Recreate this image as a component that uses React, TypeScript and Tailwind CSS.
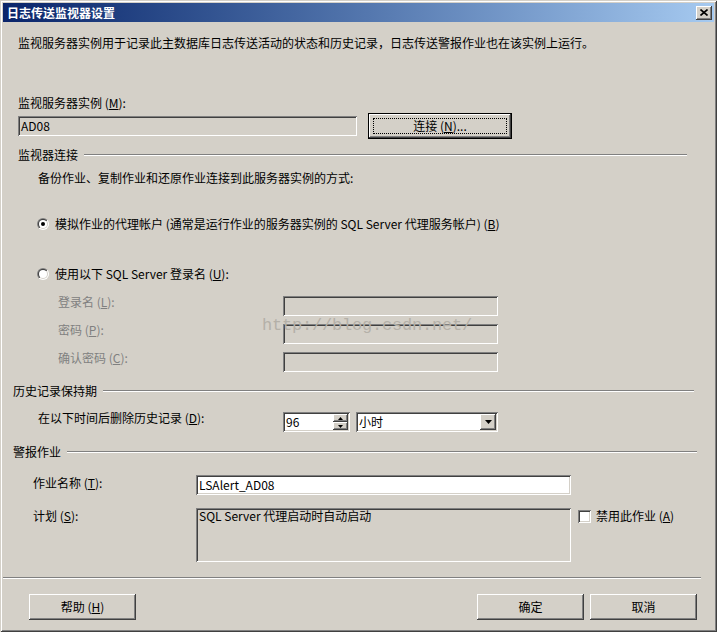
const sunken =
  "shadow-[inset_1px_1px_#808080,inset_-1px_-1px_#ffffff,inset_2px_2px_#404040,inset_-2px_-2px_#d4d0c8]";
const raised =
  "shadow-[inset_-1px_-1px_#404040,inset_1px_1px_#ffffff,inset_-2px_-2px_#808080,inset_2px_2px_#d4d0c8]";

const Mn = ({ k }: { k: string }) => (
  <>
    (<u className="underline-offset-1">{k}</u>)
  </>
);

const Radio = ({ checked }: { checked?: boolean }) => (
  <svg width="12" height="12" viewBox="0 0 12 12" className="shrink-0">
    <defs>
      <linearGradient id="rOuter" x1="0" y1="0" x2="1" y2="1">
        <stop offset="0.5" stopColor="#808080" />
        <stop offset="0.5" stopColor="#ffffff" />
      </linearGradient>
      <linearGradient id="rInner" x1="0" y1="0" x2="1" y2="1">
        <stop offset="0.5" stopColor="#404040" />
        <stop offset="0.5" stopColor="#d4d0c8" />
      </linearGradient>
    </defs>
    <circle cx="6" cy="6" r="6" fill="url(#rOuter)" />
    <circle cx="6" cy="6" r="5" fill="url(#rInner)" />
    <circle cx="6" cy="6" r="4" fill="#ffffff" />
    {checked && <circle cx="6" cy="6" r="2" fill="#000000" />}
  </svg>
);

const GroupHeader = ({ label, className }: { label: string; className: string }) => (
  <div className={`flex items-center h-4 ${className}`}>
    <span className="leading-[12px]">{label}</span>
    <div className="ml-1.5 flex-1 h-[2px] border-t border-[#808080] border-b border-b-white" />
  </div>
);

const Btn = ({ children, className = "" }: { children: React.ReactNode; className?: string }) => (
  <div className={`h-[26px] w-[107px] flex items-center justify-center bg-[#d4d0c8] ${raised} ${className}`}>
    <span className="leading-[12px]">{children}</span>
  </div>
);

export default function App() {
  return (
    <div className="relative w-[717px] h-[632px] overflow-hidden bg-[#d4d0c8] text-[12px] text-black font-['Noto_Sans_CJK_SC',sans-serif] flex flex-col shadow-[inset_1px_1px_#d4d0c8,inset_-1px_-1px_#404040,inset_2px_2px_#ffffff,inset_-2px_-2px_#808080]">
      {/* title bar */}
      <div className="mx-[3px] mt-[3px] h-[19px] flex items-center justify-between bg-gradient-to-r from-[#0a246a] to-[#a6caf0]">
        <span className="pl-[4px] font-bold text-white leading-[12px]">日志传送监视器设置</span>
        <div className={`mr-[2px] w-[16px] h-[14px] flex items-center justify-center bg-[#d4d0c8] ${raised}`}>
          <svg width="8" height="7" viewBox="0 0 8 7">
            <path d="M0.5 0.5 L7.5 6.5 M7.5 0.5 L0.5 6.5" stroke="#000" strokeWidth="1.6" />
          </svg>
        </div>
      </div>

      <div className="mt-[11px] h-5 pl-[18px] flex items-center">
        <span className="leading-[12px]">
          监视服务器实例用于记录此主数据库日志传送活动的状态和历史记录，日志传送警报作业也在该实例上运行。
        </span>
      </div>

      <div className="mt-[42px] h-4 pl-[18px] flex items-center">
        <span className="leading-[12px]">
          监视服务器实例 <Mn k="M" />:
        </span>
      </div>

      <div className="mt-[2px] h-[26px] pl-[18px] flex items-center">
        <div className={`w-[339px] h-5 pl-[3px] flex items-center bg-[#d4d0c8] ${sunken}`}>
          <span className="leading-[12px]">AD08</span>
        </div>
        <div className={`ml-[11px] relative w-[144px] h-[26px] border border-black flex items-center justify-center bg-[#d4d0c8] ${raised}`}>
          <div className="absolute inset-[4px] border border-dotted border-black" />
          <span className="leading-[12px]">
            连接 <Mn k="N" />...
          </span>
        </div>
      </div>

      <GroupHeader label="监视器连接" className="mt-[8px] ml-[18px] w-[669px]" />

      <div className="mt-[7px] h-4 pl-[38px] flex items-center">
        <span className="leading-[12px]">备份作业、复制作业和还原作业连接到此服务器实例的方式:</span>
      </div>

      <div className="mt-[30px] h-4 pl-[37px] flex items-center gap-[6px]">
        <Radio checked />
        <span className="leading-[12px]">
          模拟作业的代理帐户 (通常是运行作业的服务器实例的 SQL Server 代理服务帐户) <Mn k="B" />
        </span>
      </div>

      <div className="mt-[34px] h-4 pl-[37px] flex items-center gap-[6px]">
        <Radio />
        <span className="leading-[12px]">
          使用以下 SQL Server 登录名 <Mn k="U" />:
        </span>
      </div>

      <div className="mt-[14px] pl-[58px] flex flex-col gap-2 text-[#808080]">
        {[
          ["登录名 ", "L"],
          ["密码 ", "P"],
          ["确认密码 ", "C"],
        ].map(([t, k]) => (
          <div key={k} className="h-5 flex items-start">
            <span className="w-[225px] leading-[12px]">
              {t}
              <Mn k={k} />:
            </span>
            <div className={`w-[215px] h-5 bg-[#d4d0c8] ${sunken}`} />
          </div>
        ))}
      </div>

      <GroupHeader label="历史记录保持期" className="mt-[11px] ml-[13px] w-[681px]" />

      <div className="mt-[13px] h-5 pl-[38px] flex items-start">
        <span className="w-[245px] leading-[12px]">
          在以下时间后删除历史记录 <Mn k="D" />:
        </span>
        <div className={`w-[67px] h-5 bg-white flex items-center p-[2px] ${sunken}`}>
          <span className="pl-[1px] flex-1 leading-[12px]">96</span>
          <div className="flex flex-col w-[15px] h-4">
            <div className={`h-2 flex items-center justify-center bg-[#d4d0c8] ${raised}`}>
              <svg width="5" height="3" viewBox="0 0 5 3">
                <path d="M2.5 0 L5 3 L0 3 Z" fill="#000" />
              </svg>
            </div>
            <div className={`h-2 flex items-center justify-center bg-[#d4d0c8] ${raised}`}>
              <svg width="5" height="3" viewBox="0 0 5 3">
                <path d="M0 0 L5 0 L2.5 3 Z" fill="#000" />
              </svg>
            </div>
          </div>
        </div>
        <div className={`ml-[6px] w-[142px] h-5 bg-white flex items-center p-[2px] ${sunken}`}>
          <span className="pl-[1px] flex-1 leading-[12px]">小时</span>
          <div className={`w-4 h-4 flex items-center justify-center bg-[#d4d0c8] ${raised}`}>
            <svg width="7" height="4" viewBox="0 0 7 4">
              <path d="M0 0 L7 0 L3.5 4 Z" fill="#000" />
            </svg>
          </div>
        </div>
      </div>

      <GroupHeader label="警报作业" className="mt-[12px] ml-[13px] w-[684px]" />

      <div className="mt-[15px] h-5 pl-[33px] flex items-start">
        <span className="w-[163px] mt-[2px] leading-[12px]">
          作业名称 <Mn k="T" />:
        </span>
        <div className={`w-[375px] h-5 pl-[3px] flex items-center bg-white ${sunken}`}>
          <span className="leading-[12px]">LSAlert_AD08</span>
        </div>
      </div>

      <div className="mt-[13px] h-[54px] pl-[33px] flex items-start">
        <span className="w-[163px] mt-[2px] leading-[12px]">
          计划 <Mn k="S" />:
        </span>
        <div className={`w-[375px] h-[54px] pl-[3px] pt-[2px] leading-[12px] bg-[#d4d0c8] ${sunken}`}>
          <span>SQL Server 代理启动时自动启动</span>
        </div>
        <div className={`ml-[7px] mt-[2px] w-[13px] h-[13px] bg-white ${sunken}`} />
        <span className="ml-[5px] mt-[2px] leading-[12px]">
          禁用此作业 <Mn k="A" />
        </span>
      </div>

      <div className="mt-[15px] ml-[3px] w-[698px] h-[2px] border-t border-[#808080] border-b border-b-white" />

      <div className="mt-[15px] h-[26px] pl-[29px] flex">
        <Btn>
          帮助 <Mn k="H" />
        </Btn>
        <Btn className="ml-[341px]">确定</Btn>
        <Btn className="ml-[6px]">取消</Btn>
      </div>

      {/* blog watermark over the login fields */}
      <div className="absolute left-[262px] top-[316px] text-[17px] leading-[20px] tracking-[-0.2px] text-[#b4b0a8] font-['Liberation_Mono',monospace] pointer-events-none">
        http://blog.csdn.net/
      </div>
    </div>
  );
}
